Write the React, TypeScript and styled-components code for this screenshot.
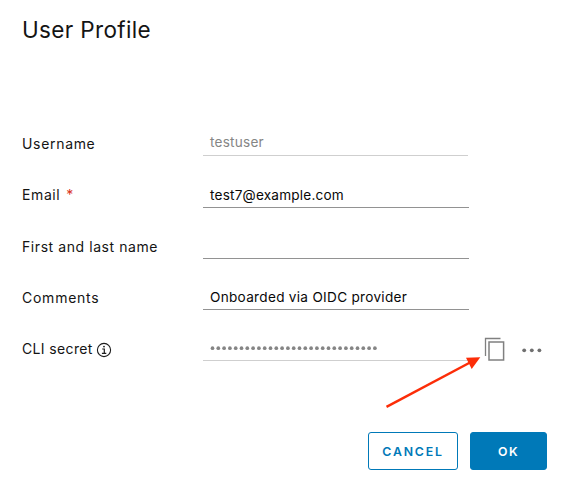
import React from "react";
import styled, { createGlobalStyle } from "styled-components";

const GlobalStyle = createGlobalStyle`
  * { box-sizing: border-box; }
  body {
    margin: 0;
    background: #fff;
    font-family: Inter, "Open Sans", sans-serif;
    overflow: hidden;
  }
`;

const Dialog = styled.main`
  position: relative;
  width: 561px;
  height: 485px;
  padding: 15px 14px 15px 22px;
  display: flex;
  flex-direction: column;
  background: #fff;
  color: #141414;
`;

const Title = styled.h1`
  margin: 0;
  height: 90.2px;
  font-size: 22.5px;
  line-height: 30px;
  font-weight: 400;
  letter-spacing: 0.35px;
`;

const Form = styled.form`
  display: flex;
  flex-direction: column;
`;

const Row = styled.div`
  display: grid;
  grid-template-columns: 181px 266px 1fr;
  height: 51.2px;
  align-items: end;
`;

const Label = styled.label<{ $spacing?: number }>`
  display: flex;
  align-items: center;
  height: 24.25px;
  font-size: 14px;
  line-height: 24px;
  white-space: nowrap;
  letter-spacing: ${(p) => p.$spacing ?? 0.6}px;
`;

const Required = styled.span`
  margin-left: 6px;
  color: #d9341c;
`;

const Field = styled.div<{ $muted?: boolean; $spacing?: number; $width?: number; $lift?: number }>`
  display: flex;
  align-items: center;
  width: ${(p) => p.$width ?? 266}px;
  height: ${(p) => 24 + (p.$lift ?? 0)}px;
  padding: 0 7px ${(p) => p.$lift ?? 0}px;
  border-bottom: 1px solid ${(p) => (p.$muted ? "#cfcfcf" : "#929292")};
  color: ${(p) => (p.$muted ? "#858585" : "#080808")};
  font-size: 13.6px;
  line-height: 24px;
  white-space: nowrap;
  letter-spacing: ${(p) => p.$spacing ?? 0.2}px;
`;

const InfoIcon = styled.svg`
  margin-left: 3px;
  margin-top: 1px;
`;

const Tools = styled.div`
  display: flex;
  align-items: center;
  height: 25px;
  padding-left: 15px;
  gap: 16px;
`;

const Arrow = styled.svg`
  position: absolute;
  left: 380px;
  top: 350px;
  pointer-events: none;
`;

const Footer = styled.footer`
  display: flex;
  justify-content: flex-end;
  gap: 12px;
  margin-top: auto;
`;

const Button = styled.button<{ $primary?: boolean }>`
  width: ${(p) => (p.$primary ? 77 : 90)}px;
  height: 38px;
  padding: 1px 0 0;
  border: 1px solid #0079b8;
  border-radius: 3px;
  background: ${(p) => (p.$primary ? "#0079b8" : "#fff")};
  color: ${(p) => (p.$primary ? "#fff" : "#0079b8")};
  font-family: inherit;
  font-size: 12.3px;
  font-weight: 600;
  letter-spacing: ${(p) => (p.$primary ? 1.4 : 1.8)}px;
`;

export default function App() {
  return (
    <>
      <GlobalStyle />
      <Dialog>
        <Title>User Profile</Title>
        <Form>
          <Row>
            <Label $spacing={0.68}>Username</Label>
            <Field $muted $width={265} $spacing={0.22} $lift={1.4}>testuser</Field>
          </Row>
          <Row>
            <Label>
              Email<Required>*</Required>
            </Label>
            <Field>test7@example.com</Field>
          </Row>
          <Row>
            <Label $spacing={0.57}>First and last name</Label>
            <Field />
          </Row>
          <Row>
            <Label $spacing={0.75}>Comments</Label>
            <Field $spacing={0.29}>Onboarded via OIDC provider</Field>
          </Row>
          <Row>
            <Label $spacing={0.36}>
              CLI secret
              <InfoIcon width="16" height="16" viewBox="0 0 16 16" fill="none" stroke="#1c1c1c">
                <circle cx="8" cy="8" r="6.6" strokeWidth="1.1" />
                <path d="M6.2 7H8.3V11.2M5.9 11.3H10.3" strokeWidth="1.2" />
                <circle cx="8" cy="4.6" r="0.9" fill="#1c1c1c" stroke="none" />
              </InfoIcon>
            </Label>
            <Field $muted>
              <svg width="170" height="6" viewBox="0 0 170 6" fill="#858585">
                {Array.from({ length: 29 }, (_, i) => (
                  <circle key={i} cx={2.5 + i * 5.8} cy="2.2" r="1.85" />
                ))}
              </svg>
            </Field>
            <Tools>
              <svg width="21" height="24" viewBox="0 0 21 24" fill="none" stroke="#808080">
                <path d="M1.5 19V1.5H16.5" strokeWidth="1.3" />
                <rect x="5" y="5" width="14.6" height="18" strokeWidth="1.5" />
              </svg>
              <svg width="22" height="24" viewBox="0 0 22 24" fill="#707070">
                <circle cx="3.2" cy="13.3" r="1.9" />
                <circle cx="10.8" cy="13.3" r="1.9" />
                <circle cx="18.4" cy="13.3" r="1.9" />
              </svg>
            </Tools>
          </Row>
        </Form>
        <Footer>
          <Button type="button">CANCEL</Button>
          <Button type="button" $primary>OK</Button>
        </Footer>
        <Arrow width="105" height="62" viewBox="0 0 105 62">
          <path d="M6.5 56.8L91 12" stroke="#fc2d08" strokeWidth="2.5" />
          <path d="M86 7.7L100.3 7.2L91.7 19Z" fill="#fc2d08" />
        </Arrow>
      </Dialog>
    </>
  );
}
